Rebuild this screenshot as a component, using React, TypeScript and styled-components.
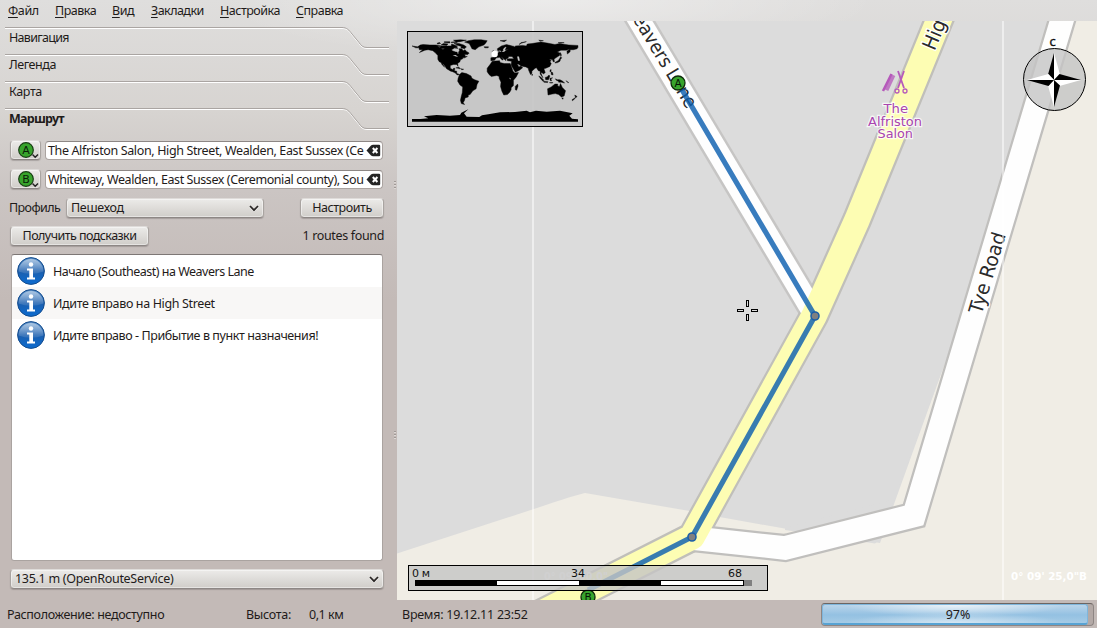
import React from 'react';
import styled, { createGlobalStyle } from 'styled-components';

const GlobalStyle = createGlobalStyle`
  * { box-sizing: border-box; }
  body { margin: 0; overflow: hidden; }
`;

const Window = styled.div`
  width: 1097px;
  height: 628px;
  display: flex;
  flex-direction: column;
  font-family: 'Noto Sans', 'Open Sans', sans-serif;
  font-size: 12.5px;
  color: #1f1b1a;
  background:
    radial-gradient(ellipse 330px 60px at 548px 0, rgba(255, 255, 255, 0.4), rgba(255, 255, 255, 0)),
    linear-gradient(#dfdedd 0, #d7d4d1 110px, #cbc5c3 190px, #c3bab7 300px);
`;

const Label = styled.span<{ $ls?: number; $bold?: boolean }>`
  white-space: pre;
  line-height: 18px;
  letter-spacing: ${(p) => p.$ls ?? 0}px;
  font-weight: ${(p) => (p.$bold ? 700 : 400)};
`;

const MenuBar = styled.nav`
  height: 21px;
  flex: none;
  display: flex;
  padding: 2px 0 0 8px;
`;

const MenuItem = styled.div<{ $w: number }>`
  width: ${(p) => p.$w}px;
  flex: none;
`;

const Mnemonic = styled.span`
  text-decoration: underline;
  text-underline-offset: 2px;
  text-decoration-thickness: 1px;
  text-decoration-skip-ink: none;
`;

const Body = styled.div`
  height: 579px;
  display: flex;
  flex: none;
`;

const SidePanel = styled.aside`
  width: 394px;
  flex: none;
  padding: 6px 0 0 5px;
`;

const Splitter = styled.div`
  width: 3px;
  flex: none;
  padding-top: 160px;
  display: flex;
  flex-direction: column;
  gap: 241px;
`;

const Grip = styled.div`
  width: 2px;
  height: 9px;
  background: repeating-linear-gradient(#a09a97 0 1px, #ddd8d6 1px 2px, transparent 2px 3px);
`;

const TabRow = styled.div`
  height: 27px;
  width: 385px;
  display: grid;
  & > * { grid-area: 1 / 1; }
  & > span { padding: 2px 0 0 4px; }
`;

const Form = styled.div`
  width: 374px;
  margin: 5px 0 0 5px;
  display: flex;
  flex-direction: column;
`;

const Row = styled.div<{ $h: number }>`
  height: ${(p) => p.$h}px;
  display: flex;
  align-items: flex-start;
`;

const Caption = styled.div<{ $w?: number }>`
  width: ${(p) => (p.$w ? `${p.$w}px` : 'auto')};
  flex: none;
  padding-top: 1px;
  margin-left: -1px;
`;

const Push = styled.div`
  flex: 1;
`;

const Button = styled.button<{ $w: number; $start?: boolean }>`
  width: ${(p) => p.$w}px;
  height: 20px;
  flex: none;
  display: flex;
  align-items: center;
  justify-content: ${(p) => (p.$start ? 'space-between' : 'center')};
  padding: ${(p) => (p.$start ? '0 4px 0 4px' : '0')};
  border: 1px solid #a9a4a1;
  border-top-color: #dedbd9;
  border-bottom-color: #8d8785;
  border-radius: 4px;
  background: linear-gradient(#ecebe9, #d0cdc9);
  box-shadow: inset 0 0 0 1px rgba(255, 255, 255, 0.45), 0 1px 1px rgba(60, 50, 50, 0.25);
  font: inherit;
  color: inherit;
`;

const Field = styled.div`
  width: 338px;
  height: 19px;
  margin: 1px 0 0 4px;
  padding: 0 1px 0 2px;
  display: flex;
  align-items: center;
  justify-content: space-between;
  background: #fff;
  border: 1px solid #aaa3a0;
  border-top-color: #8d8785;
  border-radius: 4px;
  & > svg { flex: none; }
`;

const Steps = styled.ul`
  width: 372px;
  height: 307px;
  margin: 0 0 8px 1px;
  padding: 0;
  list-style: none;
  background: #fff;
  border: 1px solid #aaa3a0;
  border-top-color: #7d7775;
  border-radius: 3px;
`;

const Step = styled.li<{ $alt?: boolean }>`
  height: 32px;
  display: flex;
  align-items: center;
  gap: 8px;
  padding-left: 5px;
  background: ${(p) => (p.$alt ? '#f8f7f6' : 'transparent')};
  & > span { padding-top: 1px; line-height: 19px; }
`;

const MapArea = styled.main`
  width: 700px;
  height: 579px;
  flex: none;
  & > svg { display: block; }
`;

const StatusBar = styled.footer`
  height: 28px;
  flex: none;
  display: flex;
  padding: 0 3px 0 7px;
`;

const StatusCell = styled.div<{ $w: number }>`
  width: ${(p) => p.$w}px;
  flex: none;
  padding-top: 6px;
`;

const Progress = styled.div`
  width: 274px;
  height: 23px;
  margin-top: 3px;
  display: grid;
  border: 1px solid #8e8684;
  border-top-color: #6c6563;
  border-radius: 4px;
  background: #b3a9a6;
  & > * { grid-area: 1 / 1; }
  & > span { justify-self: center; align-self: center; padding-left: 1px; }
`;

const ProgressFill = styled.div`
  width: 266px;
  height: 21px;
  border: 1px solid #7fb6dc;
  border-bottom: 2px solid #58a3d3;
  border-radius: 3px;
  background:
    radial-gradient(ellipse 110px 12px at 50% 0, rgba(255, 255, 255, 0.7), rgba(255, 255, 255, 0)),
    radial-gradient(ellipse 110px 10px at 50% 100%, rgba(255, 255, 255, 0.55), rgba(255, 255, 255, 0)),
    linear-gradient(#b9d4ea, #94c1e2 55%, #a5cbe6);
`;

const TabEdge = () => (
  <svg width="385" height="27" viewBox="0 0 385 27" fill="none">
    <path d="M0 1.5H337C342 1.5 344 4 347 8L354 16.500C356 19.500 358 21.500 362 21.500H384" stroke="#fff" />
    <path d="M0 .5H337C342 .5 344 3 347 7L354 15.500C356 18.500 358 20.500 362 20.500H384" stroke="#aaa5a2" />
  </svg>
);

const Chevron = () => (
  <svg width="10" height="7" viewBox="0 0 10 7" fill="none">
    <path d="M1 1L5 5.200L9 1" stroke="#f4f3f2" strokeWidth="1.500" transform="translate(0 1)" />
    <path d="M1 1L5 5.200L9 1" stroke="#2a2625" strokeWidth="1.700" />
  </svg>
);

const WaypointIcon = ({ letter }: { letter: string }) => (
  <svg width="27" height="18" viewBox="0 0 27 18">
    <circle cx="14" cy="9" r="7.300" fill="#37a42c" stroke="#173f13" strokeWidth="1.200" />
    <text x="14" y="13" textAnchor="middle" fontFamily="DejaVu Sans" fontSize="11" fill="#0b1f09">{letter}</text>
    <path d="M20.500 13.500L23.200 16.200L26 13.500" fill="none" stroke="#222" strokeWidth="1.400" />
  </svg>
);

const ClearIcon = () => (
  <svg width="15" height="13" viewBox="0 0 15 13">
    <path d="M.5 6.500L5 1.500Q6 .8 7 .8H13Q14.200 .8 14.200 2V11Q14.200 12.200 13 12.200H7Q6 12.200 5 11.500Z" fill="#242424" />
    <path d="M6.800 4L11.400 9M11.400 4L6.800 9" stroke="#fff" strokeWidth="2" />
  </svg>
);

const InfoIcon = () => (
  <svg width="28" height="28" viewBox="0 0 28 28">
    <defs>
      <linearGradient id="orb" x1="0" y1="0" x2="0" y2="1">
        <stop offset="0" stopColor="#5f93c9" />
        <stop offset=".5" stopColor="#1c5fae" />
        <stop offset="1" stopColor="#0a6bd0" />
      </linearGradient>
      <linearGradient id="gloss" x1="0" y1="0" x2="0" y2="1">
        <stop offset="0" stopColor="#fff" stopOpacity=".5" />
        <stop offset="1" stopColor="#fff" stopOpacity=".1" />
      </linearGradient>
    </defs>
    <circle cx="14" cy="14" r="13.400" fill="url(#orb)" stroke="#154d8e" strokeWidth="1" />
    <path d="M1.500 14.500A12.500 12.500 0 0 1 26.500 14.500Q14 19 1.500 14.500Z" fill="url(#gloss)" />
    <circle cx="14" cy="7.500" r="2.200" fill="#fff" />
    <path d="M10 11.500H16V20.500H18V22.500H10V20.500H12.300V13.500H10Z" fill="#fff" />
  </svg>
);

const LAND = [
  '-180,68 -168,66 -162,70 -156,71 -141,70 -128,70 -115,68 -108,68 -95,68 -94,72 -85,69 -81,68 -87,64 -94,60 -93,58 -85,55 -82,55 -82,52 -79,51 -79,55 -77,58 -78,62 -72,62 -69,58 -65,60 -61,56 -56,53 -59,50 -66,50 -64,46 -60,46 -66,43 -70,43 -70,41 -75,39 -76,35 -81,31 -80,25 -83,29 -90,29 -97,27 -97,21 -91,18 -90,21 -87,21 -88,16 -83,15 -83,10 -79,9 -77,8 -82,7 -86,11 -92,14 -96,15 -105,20 -108,25 -112,30 -114,31 -109,23 -115,29 -117,33 -121,35 -124,40 -124,48 -130,54 -135,58 -145,60 -152,59 -157,57 -164,54 -157,60 -164,60 -165,64 -172,64',
  '-66,76 -58,79 -45,81 -30,81 -17,79 -20,74 -24,70 -35,66 -43,60 -50,62 -53,68 -56,73',
  '-62,66 -68,70 -78,73 -89,73 -80,69 -73,67 -74,64 -66,62',
  '-76,77 -62,80 -75,81 -90,80 -84,76',
  '-117,70 -105,69 -102,72 -112,73',
  '-125,72 -118,73 -120,75 -125,74',
  '-110,75 -98,74 -98,77 -110,77',
  '-95,75 -82,75 -84,77 -95,76',
  '-85,66 -80,63 -86,63',
  '-85,22 -75,20 -78,23',
  '-74,20 -68,19 -72,18',
  '-77,8 -72,12 -62,10 -52,5 -50,0 -44,-3 -35,-6 -39,-13 -41,-22 -48,-26 -54,-34 -58,-35 -58,-39 -65,-41 -66,-46 -69,-51 -66,-55 -73,-53 -75,-46 -73,-37 -71,-30 -70,-18 -76,-14 -81,-6 -80,0',
  '-6,36 10,37 11,33 20,31 33,31 36,24 39,15 43,11 51,12 46,3 40,-4 40,-15 35,-20 35,-24 32,-29 27,-34 19,-35 15,-27 12,-17 13,-8 9,0 9,4 4,6 -8,4 -13,8 -17,14 -17,21 -10,30',
  '49,-12 50,-16 47,-25 44,-24 44,-17',
  '-9,37 -9,43 -2,44 -5,48 2,51 8,54 8,57 11,55 20,55 24,59 30,60 22,60 25,65 22,66 17,61 18,59 14,55.5 11,59 6,58 5,62 14,68 25,71 41,67 33,66 44,66 44,68 60,69 68,68 70,72 80,73 100,76 113,74 130,71 140,73 160,70 180,69 180,65 178,62 170,60 163,60 163,56 157,51 156,57 163,62 155,59 143,59 135,55 141,53 140,48 132,43 128,40 129,35 126,35 125,39 121,40 118,39 122,37 119,35 122,31 119,25 110,21 106,20 109,12 105,9 101,13 100,10 104,1 98,9 98,15 94,16 90,22 87,21 80,15 80,10 77,8 73,17 72,21 67,24 61,25 57,26 50,30 48,30 52,24 56,26 60,22 53,17 44,13 39,21 35,28 36,36 27,37 26,40 30,41 41,41 37,46 30,46 28,42 23,40 24,37 20,40 13,46 18,40 16,38 10,44 3,43 -1,38',
  '-5,50 1,52 -3,58 -6,57',
  '-24,66 -14,66 -15,64 -22,64',
  '11,79 25,80 20,77',
  '52,71 58,74 68,77 57,75',
  '95,80 105,79 98,78',
  '137,75 150,75 143,74',
  '130,32 136,33 141,36 142,40 145,43 142,45 140,41 137,37 131,34',
  '142,54 144,49 143,46 141,51',
  '95,5 99,3 106,-4 104,-6 99,-1',
  '105,-6 115,-7 114,-9 106,-8',
  '109,2 113,3 117,7 119,5 116,-3 110,-3',
  '119,0 125,1 121,-1 123,-5 120,-5',
  '120,18 122,18 121,14 125,12 126,7 122,8 122,12 119,15',
  '131,-1 135,-3 141,-3 147,-6 151,-10 144,-8 138,-8 138,-6 133,-4',
  '154,-5 160,-9 158,-9',
  '118,-9 126,-9 122,-10',
  '114,-22 122,-18 130,-12 136,-12 136,-16 140,-17 142,-11 146,-19 153,-26 150,-37 144,-39 138,-34 131,-32 124,-33 115,-35',
  '145,-41 148,-41 147,-44',
  '173,-35 178,-38 175,-41 174,-38',
  '173,-41 174,-42 168,-47 167,-45',
  '80,9 82,7 80,6',
];

const OverviewMap = () => (
  <g>
    <rect x="407.500" y="31.500" width="175" height="95" fill="#c4c4c4" fillOpacity=".9" stroke="#000" />
    <g transform="translate(400 20) scale(.33333)">
      <g transform="translate(285 175) scale(1.383 -1.430)">
        {LAND.map((p) => <polygon key={p} points={p} stroke="#000" strokeWidth=".9" />)}
        <g fill="#c6c6c6">
          <polygon points="48,46 52,46 54,37 50,37" />
          <polygon points="-92,48 -85,49 -80,45 -84,46" />
          <polygon points="-125,66 -120,65 -117,66" />
          <polygon points="-117,62 -109,62 -113,61" />
          <polygon points="31,1 34,0 33,-3" />
        </g>
      </g>
      <path d="M36 305V297H62L85 295L72 289L110 285L150 287L180 285L184 278L205 268L192 280L200 290L238 291L246 286L265 283L300 277L345 276L380 272L390 277L408 272L440 275L480 272L518 280L508 287L516 296L534 298V305Z" />
      <circle cx="284" cy="102" r="9.500" fill="#fff" />
    </g>
  </g>
);

const Compass = () => (
  <g>
    <circle cx="1054.500" cy="79.500" r="31" fill="#c4c4c4" fillOpacity=".8" stroke="#000" />
    <g transform="translate(1054 80)">
      {[0, 90, 180, 270].map((a) => (
        <g key={a} transform={`rotate(${a})`}>
          <path d="M0 0L-6 -5.500L0 -27Z" fill="#000" />
          <path d="M0 0L6 -5.500L0 -27Z" fill="#fff" />
        </g>
      ))}
    </g>
    <text x="1049.500" y="46" fontFamily="Noto Sans" fontSize="13" fill="#111" stroke="#111" strokeWidth=".3">с</text>
  </g>
);

const Pin = ({ x, y, letter }: { x: number; y: number; letter: string }) => (
  <g>
    <circle cx={x} cy={y} r="7" fill="#37a42c" stroke="#0f2b0c" strokeWidth="1.300" />
    <text x={x} y={y + 4} textAnchor="middle" fontFamily="DejaVu Sans" fontSize="10.500" fill="#061405">{letter}</text>
  </g>
);

const TYE = 'M1065 10L914 515.500L785 548L692 538';
const WEAVERS = 'M633 10L812 310';
const HIGH = 'M943 10L857 220L814 316L692 537L540 614';

const ROAD_NAME = { fontFamily: 'DejaVu Sans', fill: '#2a2a2a', stroke: '#fff', strokeWidth: 2.5, paintOrder: 'stroke' } as const;

const MapView = () => (
  <svg width="700" height="579" viewBox="397 21 700 579">
    <rect x="397" y="21" width="700" height="579" fill="#dcdcdc" />
    <path d="M397 553.500L540 507Q575 495 585 493L800 530L880 543L946 360L1070 21H1097V600H397Z" fill="#f0ede5" />
    <path d="M790 529.500L892 506L946 360L1054 21H700V513.500Z" fill="#dcdcdc" />
    <path d="M785 528L892 500V530L875 543.500L785 530Z" fill="#dcdcdc" />
    <g fill="none" strokeLinejoin="round">
      <path d={TYE} stroke="#c0bfbd" strokeWidth="28" strokeLinejoin="miter" />
      <path d={WEAVERS} stroke="#c6c5c4" strokeWidth="27" />
      <path d={HIGH} stroke="#c0bfba" strokeWidth="30" />
      <path d={TYE} stroke="#fefefe" strokeWidth="23.500" strokeLinejoin="miter" />
      <path d={WEAVERS} stroke="#fefefe" strokeWidth="22" />
      <path d={HIGH} stroke="#fdfdb3" strokeWidth="25.500" />
    </g>

    <g {...ROAD_NAME}>
      <text transform="translate(624 5) rotate(59)" fontSize="19" textLength="122" lengthAdjust="spacingAndGlyphs">Weavers Lane</text>
      <text transform="translate(981.500 315) rotate(-73)" fontSize="19.500" textLength="84" lengthAdjust="spacingAndGlyphs">Tye Road</text>
      <text transform="translate(934.500 51.500) rotate(-67)" fontSize="20" textLength="106" lengthAdjust="spacingAndGlyphs">High Street</text>
    </g>
    <g fontFamily="DejaVu Sans" fontSize="13" fill="#a944af" stroke="#fff" strokeOpacity=".75" strokeWidth="2.500" paintOrder="stroke">
      <text x="883.500" y="113" textLength="24.500" lengthAdjust="spacingAndGlyphs">The</text>
      <text x="868" y="126" textLength="54" lengthAdjust="spacingAndGlyphs">Alfriston</text>
      <text x="877.500" y="138" textLength="35.500" lengthAdjust="spacingAndGlyphs">Salon</text>
    </g>
    <g fill="none" stroke="#b65abb">
      <path d="M891.500 74L883 91" strokeWidth="2.500" />
      <path d="M893 75L886 90" strokeWidth="5" opacity=".75" />
      <path d="M898 71L904 88M904 71L898 88" strokeWidth="1.800" />
      <circle cx="897" cy="91" r="2" strokeWidth="1.300" />
      <circle cx="905" cy="91" r="2" strokeWidth="1.300" />
    </g>

    <path d="M533 21V600M1003 21V600" stroke="#fff" strokeOpacity=".5" strokeWidth="2" />

    <path d="M678 83L815 316L692 537L588 590" fill="none" stroke="#0c5fb0" strokeOpacity=".82" strokeWidth="5.200" strokeLinejoin="round" />
    {[[815, 316], [692, 537]].map(([x, y]) => (
      <circle key={x} cx={x} cy={y} r="4" fill="#808080" stroke="#1c5fa8" strokeWidth="1.600" />
    ))}
    <Pin x={678} y={83} letter="A" />
    <Pin x={588} y={597} letter="B" />

    <g fill="none" stroke="#000">
      <rect x="746.500" y="300.500" width="2" height="6" />
      <rect x="746.500" y="314.500" width="2" height="6" />
      <rect x="737.500" y="309.500" width="6" height="2" />
      <rect x="751.500" y="309.500" width="6" height="2" />
    </g>

    <OverviewMap />
    <Compass />

    <g fontFamily="DejaVu Sans" fontSize="11" fontWeight="700" fill="#fff">
      <text x="544" y="580" textLength="64" lengthAdjust="spacingAndGlyphs">0° 09' 00,0"</text>
      <text x="1011" y="580" textLength="76" lengthAdjust="spacingAndGlyphs">0° 09' 25,0"В</text>
    </g>
    <g>
      <rect x="408.500" y="565.500" width="359" height="25" fill="#c4c4c4" fillOpacity=".8" stroke="#000" />
      <rect x="415" y="580" width="329" height="6" />
      <rect x="497" y="581" width="82" height="4" fill="#fff" />
      <rect x="661" y="581" width="82" height="4" fill="#fff" />
      <rect x="744" y="580" width="8" height="6" fill="#808080" />
      <g fontFamily="DejaVu Sans" fontSize="11" fill="#111">
        <text x="412" y="577" textLength="18">0 м</text>
        <text x="571" y="577" textLength="14">34</text>
        <text x="728" y="577" textLength="14">68</text>
      </g>
    </g>
  </svg>
);

const MENU: [string, string, number, number][] = [
  ['Ф', 'айл', 47, -0.4],
  ['П', 'равка', 57, -0.5],
  ['В', 'ид', 39, -0.4],
  ['З', 'акладки', 69, -0.55],
  ['Н', 'астройка', 76, -0.5],
  ['С', 'правка', 60, -0.5],
];

export default function App() {
  return (
    <>
      <GlobalStyle />
      <Window>
        <MenuBar>
          {MENU.map(([key, rest, w, ls]) => (
            <MenuItem key={rest} $w={w}>
              <Label $ls={ls}><Mnemonic>{key}</Mnemonic>{rest}</Label>
            </MenuItem>
          ))}
        </MenuBar>
        <Body>
          <SidePanel>
            <TabRow><TabEdge /><Label $ls={-0.7}>Навигация</Label></TabRow>
            <TabRow><TabEdge /><Label $ls={-0.45}>Легенда</Label></TabRow>
            <TabRow><TabEdge /><Label $ls={-0.4}>Карта</Label></TabRow>
            <TabRow><TabEdge /><Label $bold $ls={-0.75}>Маршрут</Label></TabRow>
            <Form>
              <Row $h={29}>
                <Button $w={31}><WaypointIcon letter="A" /></Button>
                <Field><Label $ls={-0.37}>The Alfriston Salon, High Street, Wealden, East Sussex (Ce</Label><ClearIcon /></Field>
              </Row>
              <Row $h={29}>
                <Button $w={31}><WaypointIcon letter="B" /></Button>
                <Field><Label $ls={-0.42}>Whiteway, Wealden, East Sussex (Ceremonial county), Sou</Label><ClearIcon /></Field>
              </Row>
              <Row $h={28}>
                <Caption $w={57}><Label $ls={-0.6}>Профиль</Label></Caption>
                <Button $w={198} $start><Label $ls={-0.3}>Пешеход</Label><Chevron /></Button>
                <Push />
                <Button $w={84}><Label $ls={-0.45}>Настроить</Label></Button>
              </Row>
              <Row $h={28}>
                <Button $w={139}><Label $ls={-0.55}>Получить подсказки</Label></Button>
                <Push />
                <Caption><Label $ls={-0.35}>1 routes found</Label></Caption>
              </Row>
              <Steps>
                <Step><InfoIcon /><Label $ls={-0.5}>Начало (Southeast) на Weavers Lane</Label></Step>
                <Step $alt><InfoIcon /><Label $ls={-0.36}>Идите вправо на High Street</Label></Step>
                <Step><InfoIcon /><Label $ls={-0.42}>Идите вправо - Прибытие в пункт назначения!</Label></Step>
              </Steps>
              <Button $w={374} $start><Label $ls={-0.3}>135.1 m (OpenRouteService)</Label><Chevron /></Button>
            </Form>
          </SidePanel>
          <Splitter><Grip /><Grip /></Splitter>
          <MapArea><MapView /></MapArea>
        </Body>
        <StatusBar>
          <StatusCell $w={239}><Label $ls={-0.34}>Расположение: недоступно</Label></StatusCell>
          <StatusCell $w={63}><Label $ls={-0.3}>Высота:</Label></StatusCell>
          <StatusCell $w={93}><Label $ls={-0.45}>0,1 км</Label></StatusCell>
          <StatusCell $w={419}><Label $ls={-0.25}>Время: 19.12.11 23:52</Label></StatusCell>
          <Progress><ProgressFill /><Label>97%</Label></Progress>
        </StatusBar>
      </Window>
    </>
  );
}
